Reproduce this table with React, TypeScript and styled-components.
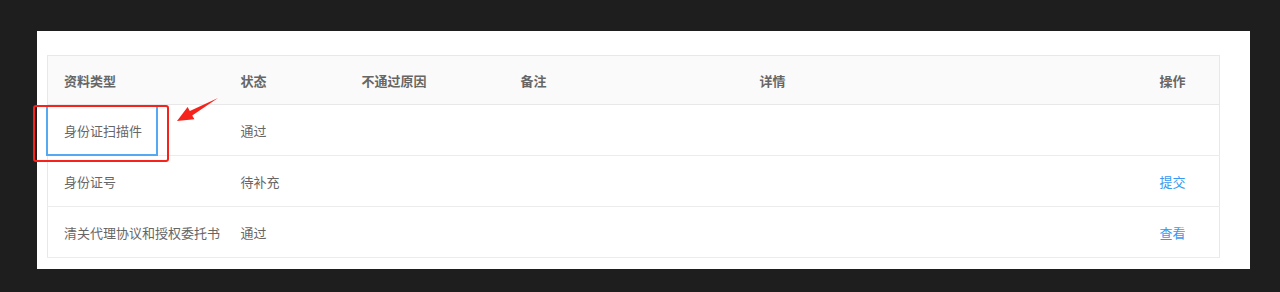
import styled, { createGlobalStyle } from "styled-components";

const GlobalStyle = createGlobalStyle`
    html, body {
        margin: 0;
        padding: 0;
        background: #1e1e1e;
        font-family: "Noto Sans CJK SC", "Noto Sans", sans-serif;
    }
`;

const Panel = styled.div`
    width: 1213px;
    height: 238px;
    margin: 31px 0 0 37px;
    padding: 24px 31px 0 10px;
    box-sizing: border-box;
    background: #fff;
`;

const TableWrap = styled.div`
    position: relative;
    width: 1172px;
`;

const Table = styled.table`
    width: 100%;
    border-collapse: collapse;
    table-layout: fixed;
    border: 1px solid #e8e8e8;
    font-size: 13px;
`;

const HeadCell = styled.th`
    height: 48px;
    padding: 0 16px;
    text-align: left;
    font-weight: 700;
    color: #666;
    background: #fafafa;
    border-bottom: 1px solid #e8e8e8;
`;

const Cell = styled.td<{ $link?: boolean }>`
    height: 50px;
    padding: 0 16px;
    color: ${(p) => (p.$link ? "#3a98f2" : "#666")};
    cursor: ${(p) => (p.$link ? "pointer" : "default")};
    border-bottom: 1px solid #ececec;
    white-space: nowrap;
`;

// highlight annotation boxes drawn over the first data row
const FocusBox = styled.span`
    position: absolute;
    left: -1px;
    top: 50px;
    width: 112px;
    height: 51px;
    box-sizing: border-box;
    border: 2px solid #55a9f2;
    pointer-events: none;
`;

const MarkBox = styled.span`
    position: absolute;
    left: -14px;
    top: 50px;
    width: 136px;
    height: 57px;
    box-sizing: border-box;
    border: 2px solid #f5231b;
    border-radius: 3px;
    pointer-events: none;
`;

const Arrow = styled.svg`
    position: absolute;
    left: 125px;
    top: 40px;
    width: 50px;
    height: 30px;
    pointer-events: none;
`;

const columns = [177, 121, 159, 239, 400, 76];
const headers = ["资料类型", "状态", "不通过原因", "备注", "详情", "操作"];

const rows = [
    { type: "身份证扫描件", status: "通过", action: "" },
    { type: "身份证号", status: "待补充", action: "提交" },
    { type: "清关代理协议和授权委托书", status: "通过", action: "查看" },
];

export default function App() {
    return (
        <>
            <GlobalStyle />
            <Panel>
                <TableWrap>
                    <Table>
                        <colgroup>
                            {columns.map((w, i) => (
                                <col key={i} style={{ width: w }} />
                            ))}
                        </colgroup>
                        <thead>
                            <tr>
                                {headers.map((h) => (
                                    <HeadCell key={h}>{h}</HeadCell>
                                ))}
                            </tr>
                        </thead>
                        <tbody>
                            {rows.map((r) => (
                                <tr key={r.type}>
                                    <Cell>{r.type}</Cell>
                                    <Cell>{r.status}</Cell>
                                    <Cell />
                                    <Cell />
                                    <Cell />
                                    <Cell $link>{r.action}</Cell>
                                </tr>
                            ))}
                        </tbody>
                    </Table>
                    <FocusBox />
                    <MarkBox />
                    <Arrow viewBox="0 0 50 30">
                        <polygon
                            points="5,26 15.6,12.1 17.8,16 46,3 20.2,20.4 22.4,24.3"
                            fill="#f5231b"
                        />
                    </Arrow>
                </TableWrap>
            </Panel>
        </>
    );
}
